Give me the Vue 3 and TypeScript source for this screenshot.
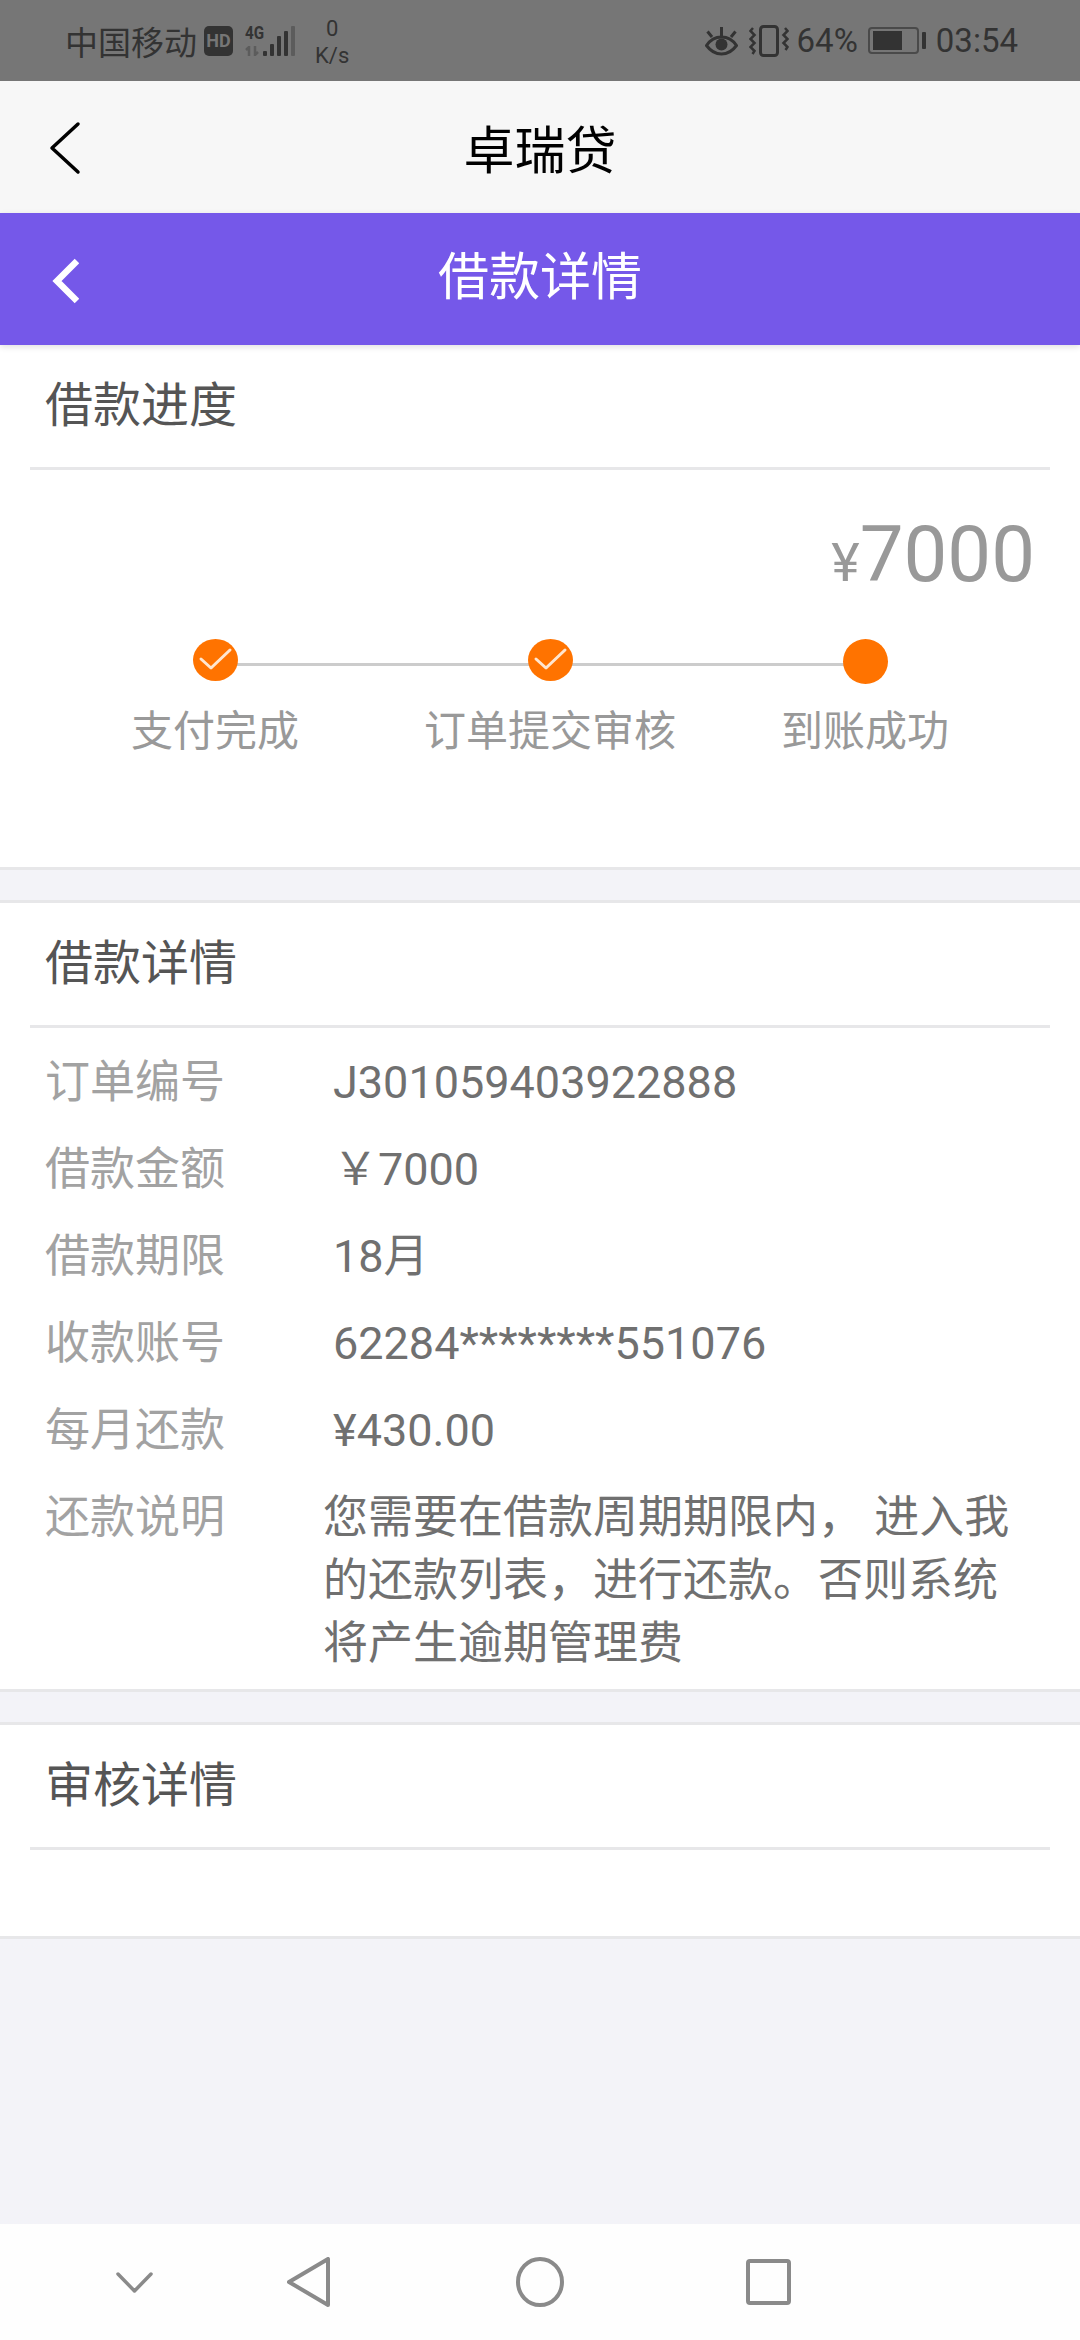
<template>
  <div class="page">
    <div class="status-bar">
      <div class="status-left">
        <span class="carrier">中国移动</span>
        <span class="hd">HD</span>
        <div class="signal">
          <div class="signal-type">
            <span class="net">4G</span>
            <svg width="15" height="10" viewBox="0 0 15 10" fill="none">
              <path d="M4 10V1L1 4M10 0v9l3-3" stroke="#5c5c5c" stroke-width="2.5" />
            </svg>
          </div>
          <svg class="bars" width="32" height="30" viewBox="0 0 32 30">
            <rect x="0" y="25" width="4" height="5" rx="1" fill="#333" />
            <rect x="7" y="18" width="4" height="12" rx="1" fill="#333" />
            <rect x="14" y="10" width="4" height="20" rx="1" fill="#333" />
            <rect x="21" y="5" width="4" height="25" rx="1" fill="#333" />
            <rect x="28" y="0" width="4" height="30" rx="1" fill="#5c5c5c" />
          </svg>
        </div>
        <div class="speed">
          <span>0</span>
          <span>K/s</span>
        </div>
      </div>
      <div class="status-right">
        <svg width="33" height="30" viewBox="0 0 33 30" fill="none" stroke="#333">
          <path d="M1.5 19.5c4-6 9-8.5 15-8.5s11 2.5 15 8.5c-4 5.5-9 8.5-15 8.5s-11-3-15-8.5z" stroke-width="3" />
          <circle cx="16.5" cy="18.5" r="6" fill="#333" stroke="none" />
          <path d="M16.5 10V1M7 11L2.5 5.5M26 11l4.5-5.5" stroke-width="3" />
        </svg>
        <svg class="vibrate" width="40" height="32" viewBox="0 0 40 32" fill="none" stroke="#333">
          <rect x="11.5" y="1.5" width="17" height="29" rx="3" stroke-width="3" />
          <path d="M4 3L1.5 6l4 4-4 4 4 4-4 4 4 4-2 3M36 3l2.5 3-4 4 4 4-4 4 4 4-2 3" stroke-width="2.5" />
        </svg>
        <span class="battery-pct">64%</span>
        <div class="battery">
          <div class="battery-body"><div class="battery-fill"></div></div>
          <div class="battery-tip"></div>
        </div>
        <span class="clock">03:54</span>
      </div>
    </div>

    <div class="app-bar">
      <svg class="app-back" width="32" height="54" viewBox="0 0 32 54" fill="none">
        <path d="M29 3L3 27l26 24" stroke="#000" stroke-width="3.5" stroke-linecap="round" stroke-linejoin="round" />
      </svg>
      <span class="app-title">卓瑞贷</span>
    </div>

    <div class="title-bar">
      <svg class="title-back" width="30" height="48" viewBox="0 0 30 48" fill="none">
        <path d="M28 4L8 24l20 20" stroke="#fff" stroke-width="6.5" />
      </svg>
      <span class="page-title">借款详情</span>
    </div>

    <section class="card first">
      <div class="card-title">借款进度</div>
      <div class="amount"><span class="yen">¥</span>7000</div>
      <div class="steps">
        <div v-for="step in steps" :key="step.label" class="step">
          <div class="dot" :class="{ current: !step.done }">
            <svg v-if="step.done" width="45" height="42" viewBox="0 0 45 42" fill="none">
              <path d="M8 20l10 9 19-18" stroke="#ffe6cf" stroke-width="3" stroke-linecap="round" stroke-linejoin="round" />
            </svg>
          </div>
          <div class="step-label">{{ step.label }}</div>
        </div>
      </div>
    </section>

    <section class="card second">
      <div class="card-title">借款详情</div>
      <div class="rows">
        <div v-for="row in rows" :key="row.label" class="row">
          <span class="row-label">{{ row.label }}</span>
          <span class="row-value">{{ row.value }}</span>
        </div>
        <div class="row note">
          <span class="row-label">还款说明</span>
          <span class="note-text">您需要在借款周期期限内， 进入我的还款列表，进行还款。否则系统将产生逾期管理费</span>
        </div>
      </div>
    </section>

    <section class="card third">
      <div class="card-title">审核详情</div>
    </section>

    <div class="spacer"></div>

    <div class="nav-bar">
      <svg width="37" height="21" viewBox="0 0 37 21" fill="none">
        <path d="M2 2l16.5 17L35 2" stroke="#8a8a8a" stroke-width="3.5" stroke-linecap="round" stroke-linejoin="round" />
      </svg>
      <svg class="nav-back" width="43" height="50" viewBox="0 0 43 50" fill="none">
        <path d="M41 2v46L2 25z" stroke="#8a8a8a" stroke-width="4" stroke-linejoin="round" />
      </svg>
      <svg class="nav-home" width="48" height="50" viewBox="0 0 48 50" fill="none">
        <ellipse cx="24" cy="25" rx="22" ry="23" stroke="#8a8a8a" stroke-width="4" />
      </svg>
      <svg class="nav-recent" width="45" height="46" viewBox="0 0 45 46" fill="none">
        <rect x="2" y="2" width="41" height="42" rx="2" stroke="#8a8a8a" stroke-width="4" />
      </svg>
    </div>
  </div>
</template>

<script setup lang="ts">
interface Step {
  label: string;
  done: boolean;
}

interface Row {
  label: string;
  value: string;
}

const steps: Step[] = [
  { label: '支付完成', done: true },
  { label: '订单提交审核', done: true },
  { label: '到账成功', done: false },
];

const rows: Row[] = [
  { label: '订单编号', value: 'J301059403922888' },
  { label: '借款金额', value: '￥7000' },
  { label: '借款期限', value: '18月' },
  { label: '收款账号', value: '62284********551076' },
  { label: '每月还款', value: '¥430.00' },
];
</script>

<style>
html,
body {
  margin: 0;
  background: #f3f3f8;
}
</style>

<style scoped>
.page {
  width: 1080px;
  height: 2340px;
  display: flex;
  flex-direction: column;
  overflow: hidden;
  background: #f3f3f8;
  font-family: Roboto, "Noto Sans CJK SC", sans-serif;
}
.status-bar {
  height: 81px;
  background: #767676;
  color: #333;
  display: flex;
  justify-content: space-between;
  align-items: center;
  padding: 0 62px 0 65px;
  flex-shrink: 0;
}
.status-left,
.status-right {
  display: flex;
  align-items: center;
}
.carrier {
  font-size: 33px;
}
.hd {
  margin-left: 7px;
  width: 29px;
  height: 30px;
  border-radius: 5px;
  background: #333;
  color: #767676;
  font-size: 18px;
  font-weight: 700;
  line-height: 30px;
  text-align: center;
}
.signal {
  margin-left: 12px;
  width: 50px;
  height: 30px;
  display: flex;
  justify-content: space-between;
}
.signal-type {
  width: 17px;
  display: flex;
  flex-direction: column;
  justify-content: space-between;
}
.net {
  display: block;
  font-size: 19px;
  font-weight: 700;
  line-height: 14px;
  white-space: nowrap;
  transform: scaleX(0.8);
  transform-origin: left center;
}
.speed {
  margin-left: 20px;
  display: flex;
  flex-direction: column;
  align-items: center;
  font-size: 22px;
  line-height: 27px;
  padding-top: 2px;
}
.vibrate {
  margin-left: 11px;
}
.battery-pct {
  margin-left: 8px;
  font-size: 33px;
}
.battery {
  margin-left: 10px;
  display: flex;
  align-items: center;
}
.battery-body {
  width: 51px;
  height: 27px;
  padding: 2px 3px;
  border: 2px solid #4a4a4a;
  border-radius: 4px;
  box-sizing: border-box;
}
.battery-fill {
  width: 29px;
  height: 100%;
  background: #333;
}
.battery-tip {
  width: 4px;
  height: 17px;
  margin-left: 3px;
  background: #333;
  border-radius: 1px;
}
.clock {
  margin-left: 10px;
  font-size: 33px;
}
.app-bar {
  height: 132px;
  background: #f7f7f7;
  display: flex;
  align-items: center;
  justify-content: center;
  position: relative;
  flex-shrink: 0;
}
.app-back {
  position: absolute;
  left: 49px;
  top: 40px;
}
.app-title {
  font-size: 51px;
  color: #000;
}
.title-bar {
  height: 132px;
  padding-bottom: 12px;
  box-sizing: border-box;
  background: #7558e9;
  display: flex;
  align-items: center;
  justify-content: center;
  position: relative;
  flex-shrink: 0;
  box-shadow: 0 2px 6px rgba(0, 0, 0, 0.12);
  z-index: 1;
}
.title-back {
  position: absolute;
  left: 49px;
  top: 44px;
}
.page-title {
  font-size: 51px;
  color: #fff;
}
.card {
  background: #fff;
  border-bottom: 3px solid #e7e7e9;
  box-sizing: border-box;
}
.second,
.third {
  margin-top: 30px;
  border-top: 3px solid #e7e7e9;
}
.first {
  height: 525px;
}
.second {
  height: 792px;
}
.third {
  height: 217px;
}
.card-title {
  margin: 0 30px;
  height: 125px;
  padding: 0 15px;
  box-sizing: border-box;
  border-bottom: 3px solid #e7e7e9;
  font-size: 48px;
  line-height: 122px;
  color: #555;
}
.amount {
  margin-top: 40px;
  padding-right: 45px;
  text-align: right;
  font-size: 78px;
  line-height: 90px;
  color: #999;
}
.yen {
  font-size: 54px;
  line-height: 1;
}
.steps {
  margin-top: 39px;
  display: grid;
  grid-template-columns: 350px 320px 310px;
  padding-left: 40px;
  position: relative;
}
.steps::before {
  content: "";
  position: absolute;
  left: 215px;
  width: 650px;
  top: 24px;
  height: 3px;
  background: #ccc;
}
.step {
  position: relative;
  display: flex;
  flex-direction: column;
  align-items: center;
}
.dot {
  width: 45px;
  height: 42px;
  margin-bottom: 3px;
  border-radius: 50%;
  background: #ff7300;
}
.dot.current {
  height: 45px;
  margin-bottom: 0;
}
.dot svg {
  display: block;
}
.step-label {
  margin-top: 22px;
  font-size: 42px;
  line-height: 52px;
  color: #999;
  white-space: nowrap;
}
.rows {
  padding: 11px 45px 0;
}
.row {
  display: flex;
  height: 87px;
  line-height: 87px;
  font-size: 45px;
}
.row-label {
  width: 288px;
  color: #a2a2a2;
  flex-shrink: 0;
}
.row-value {
  color: #707070;
}
.note {
  height: auto;
  margin-top: 12px;
  line-height: 63px;
}
.note .row-label {
  width: 278px;
}
.note-text {
  color: #707070;
}
.spacer {
  flex: 1;
}
.nav-bar {
  height: 116px;
  background: #fefefe;
  flex-shrink: 0;
  display: flex;
  align-items: center;
  padding-left: 116px;
}
.nav-back {
  margin-left: 134px;
}
.nav-home {
  margin-left: 186px;
}
.nav-recent {
  margin-left: 182px;
}
</style>
